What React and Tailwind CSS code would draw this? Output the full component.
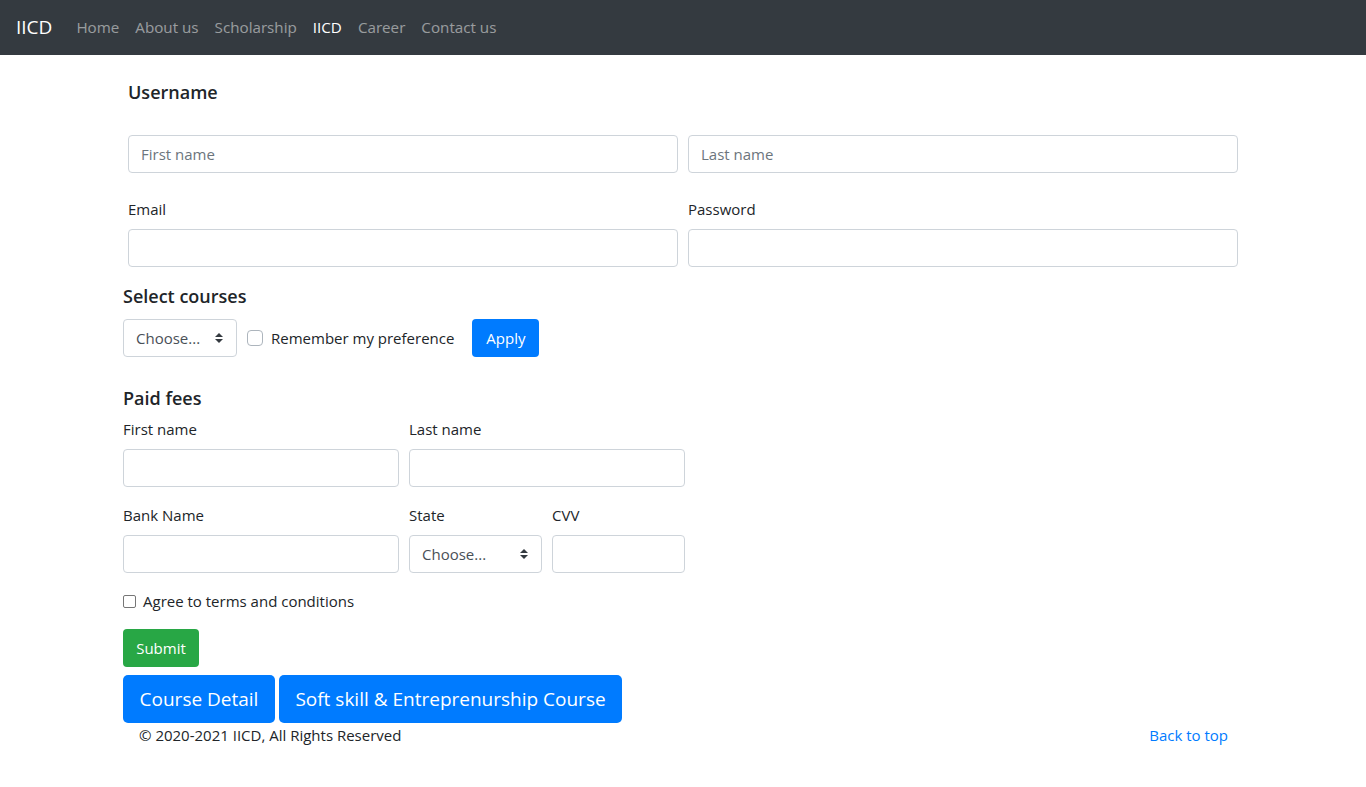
import React from 'react';

const Arrows = () => (
    <svg width="8" height="10" viewBox="0 0 4 5" className="absolute right-[13px] top-1/2 -translate-y-1/2">
        <path fill="#343a40" d="M2 0L0 2h4zm0 5L0 3h4z" />
    </svg>
);

const Select = ({ className }) => (
    <div className={`relative h-[38px] border border-[#ced4da] rounded bg-white flex items-center pl-3 text-[#495057] ${className}`}>
        <span>Choose...</span>
        <Arrows />
    </div>
);

const Input = ({ placeholder, className = '' }) => (
    <input
        type="text"
        placeholder={placeholder}
        className={`h-[38px] border border-[#ced4da] rounded px-3 bg-white text-[#495057] placeholder:text-[#6c757d] outline-none ${className}`}
    />
);

const Label = ({ children }) => <label className="block mb-2 leading-6">{children}</label>;

const navLinks = ['Home', 'About us', 'Scholarship', 'IICD', 'Career', 'Contact us'];

export default function App() {
    return (
        <div className="min-h-screen bg-white text-[#212529] text-[15px] leading-6 font-['Open_Sans','Noto_Sans',sans-serif]">
            <nav className="h-[55px] bg-[#343a40] flex items-center px-4 pb-px text-[15.2px]">
                <span className="text-[19px] text-white mr-4">IICD</span>
                {navLinks.map((l) => (
                    <a key={l} href="#" className={`px-2 ${l === 'IICD' ? 'text-white' : 'text-white/50'}`}>
                        {l}
                    </a>
                ))}
            </nav>

            <div className="w-[1140px] mx-auto px-[15px]">
                {/* Username block */}
                <h5 className="text-[18px] font-semibold leading-6 mt-[25px]">Username</h5>
                <div className="flex gap-[10px] mt-[31px]">
                    <Input placeholder="First name" className="flex-1" />
                    <Input placeholder="Last name" className="flex-1" />
                </div>
                <div className="flex gap-[10px] mt-6">
                    <div className="flex-1">
                        <Label>Email</Label>
                        <Input className="w-full" />
                    </div>
                    <div className="flex-1">
                        <Label>Password</Label>
                        <Input className="w-full" />
                    </div>
                </div>

                <div className="ml-[-5px]">
                    <h5 className="text-[18px] font-semibold leading-6 mt-[17px]">Select courses</h5>
                    <div className="flex items-center mt-[11px]">
                        <Select className="w-[114px]" />
                        <div className="flex items-center ml-[10px]">
                            <span className="w-4 h-4 border border-[#adb5bd] rounded bg-white" />
                            <span className="ml-2">Remember my preference</span>
                        </div>
                        <button className="ml-[18px] h-[38px] w-[67px] rounded bg-[#007bff] text-white">Apply</button>
                    </div>

                    <h5 className="text-[18px] font-semibold leading-6 mt-[29px]">Paid fees</h5>
                    <div className="flex gap-[10px] mt-[7px] w-[562px]">
                        <div className="w-[276px]">
                            <Label>First name</Label>
                            <Input className="w-full" />
                        </div>
                        <div className="w-[276px]">
                            <Label>Last name</Label>
                            <Input className="w-full" />
                        </div>
                    </div>
                    <div className="flex gap-[10px] mt-4 w-[562px]">
                        <div className="w-[276px]">
                            <Label>Bank Name</Label>
                            <Input className="w-full" />
                        </div>
                        <div className="w-[133px]">
                            <Label>State</Label>
                            <Select className="w-full" />
                        </div>
                        <div className="w-[133px]">
                            <Label>CVV</Label>
                            <Input className="w-full" />
                        </div>
                    </div>
                    <div className="flex items-center mt-4 h-6">
                        <span className="w-[13px] h-[13px] border border-[#767676] rounded-[2px] bg-white" />
                        <span className="ml-[7px]">Agree to terms and conditions</span>
                    </div>
                    <button className="mt-4 h-[38px] w-[76px] rounded bg-[#28a745] text-white">Submit</button>
                    <div className="flex gap-1 mt-2">
                        <button className="h-12 w-[152px] rounded-[5px] bg-[#007bff] text-white text-[19px]">Course Detail</button>
                        <button className="h-12 w-[343px] rounded-[5px] bg-[#007bff] text-white text-[19px]">
                            Soft skill &amp; Entreprenurship Course
                        </button>
                    </div>
                </div>
            </div>

            <footer className="w-[1140px] mx-auto flex justify-between pl-[26px] pr-[25px] leading-6">
                <p>© 2020-2021 IICD, All Rights Reserved</p>
                <a href="#" className="text-[#007bff]">Back to top</a>
            </footer>
        </div>
    );
}
